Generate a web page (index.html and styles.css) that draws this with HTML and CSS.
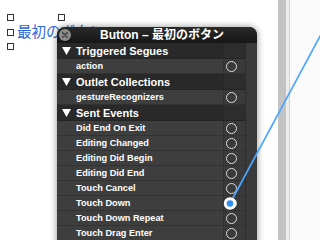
FILE: index.html
```html
<!DOCTYPE html>
<html>
<head>
<meta charset="utf-8">
<link rel="stylesheet" href="styles.css">
</head>
<body>
<div class="screen">
  <div class="canvas">
    <div class="btn">
      <span class="h h-tl"></span>
      <span class="h h-tr"></span>
      <span class="h h-ml"></span>
      <span class="h h-bl"></span>
      <span class="btn-label">最初のボタン</span>
    </div>
    <div class="panel">
      <div class="titlebar">
        <span class="close"><svg width="12" height="12" viewBox="0 0 12 12"><circle cx="6" cy="6" r="6" fill="#8c8c8c"/><path d="M3.8 3.8 L8.2 8.2 M8.2 3.8 L3.8 8.2" stroke="#4a4a4a" stroke-width="1.8" stroke-linecap="round"/></svg></span>
        <span class="title">Button – 最初のボタン</span>
      </div>
      <div class="body">
        <div class="list">
          <div class="row head"><span class="tri"><svg width="9" height="8" viewBox="0 0 9 8"><polygon points="0,0 9,0 4.5,8" fill="#fff"/></svg></span><span class="htext">Triggered Segues</span><span class="col"></span></div>
          <div class="row item"><span class="itext">action</span><span class="col"><i class="ring"></i></span></div>
          <div class="row head"><span class="tri"><svg width="9" height="8" viewBox="0 0 9 8"><polygon points="0,0 9,0 4.5,8" fill="#fff"/></svg></span><span class="htext">Outlet Collections</span><span class="col"></span></div>
          <div class="row item"><span class="itext">gestureRecognizers</span><span class="col"><i class="ring"></i></span></div>
          <div class="row head"><span class="tri"><svg width="9" height="8" viewBox="0 0 9 8"><polygon points="0,0 9,0 4.5,8" fill="#fff"/></svg></span><span class="htext">Sent Events</span><span class="col"></span></div>
          <div class="row item"><span class="itext">Did End On Exit</span><span class="col"><i class="ring"></i></span></div>
          <div class="row item"><span class="itext">Editing Changed</span><span class="col"><i class="ring"></i></span></div>
          <div class="row item"><span class="itext">Editing Did Begin</span><span class="col"><i class="ring"></i></span></div>
          <div class="row item"><span class="itext">Editing Did End</span><span class="col"><i class="ring"></i></span></div>
          <div class="row item"><span class="itext">Touch Cancel</span><span class="col"><i class="ring"></i></span></div>
          <div class="row item"><span class="itext">Touch Down</span><span class="col"><i class="ring"></i></span></div>
          <div class="row item"><span class="itext">Touch Down Repeat</span><span class="col"><i class="ring"></i></span></div>
          <div class="row item"><span class="itext">Touch Drag Enter</span><span class="col"><i class="ring"></i></span></div>
        </div>
        <div class="scroll"></div>
      </div>
    </div>
  </div>
  <div class="strip-gray"></div>
  <div class="strip-light"></div>
  <div class="pane"></div>
  <svg class="wire" width="320" height="240" viewBox="0 0 320 240">
    <line x1="230" y1="203.5" x2="332" y2="14" stroke="#4aa6ff" stroke-width="1.7"/>
    <circle cx="230" cy="203.5" r="6.2" fill="#ffffff"/>
    <circle cx="230" cy="203.5" r="3.3" fill="#2f8ff0"/>
  </svg>
</div>
</body>
</html>
```
FILE: styles.css
```css
* { box-sizing: border-box; }
html, body { margin: 0; padding: 0; }
body { width: 320px; height: 240px; overflow: hidden; background: #fff; font-family: "Liberation Sans", Arial, sans-serif; }
.screen { position: relative; display: flex; width: 320px; height: 240px; overflow: hidden; }
.canvas { position: relative; width: 278px; height: 240px; background: #fff; }
.strip-gray { width: 8px; background: #c3c3c3; }
.strip-light { width: 4px; background: #ececec; border-right: 1px solid #d2d2d2; }
.pane { flex: 1; background: #fafafa; }

.btn { position: absolute; left: 10px; top: 17px; width: 51px; height: 29px; }
.h { position: absolute; width: 7px; height: 7px; background: #fff; border: 1px solid #333; }
.h-tl { left: -3px; top: -3px; }
.h-tr { left: 48px; top: -3px; }
.h-ml { left: -3px; top: 12px; }
.h-bl { left: -3px; top: 26px; }
.btn-label { position: absolute; left: 7px; top: 4px; font-family: "Noto Sans CJK JP", sans-serif; font-size: 14.5px; line-height: 19px; color: #2c68d6; white-space: nowrap; }

.panel { position: absolute; left: 57px; top: 27px; width: 200px; height: 230px; background: #3e3e3e; border-radius: 8px 8px 0 0; box-shadow: 0 0 7px rgba(0,0,0,0.45); overflow: hidden; }
.titlebar { display: flex; align-items: center; height: 16px; background: linear-gradient(#2a2a2a, #161616); }
.close { display: flex; width: 12px; height: 12px; margin-left: 2px; }
.title { flex: 1; text-align: center; color: #fff; font-weight: bold; font-size: 12px; line-height: 16px; font-family: "Liberation Sans", "Noto Sans CJK JP", sans-serif; padding-right: 4px; white-space: nowrap; }
.body { display: flex; }
.list { width: 188px; }
.scroll { width: 12px; background: #3a3a3a; border-left: 1px solid #2c2c2c; }
.row { display: flex; align-items: center; color: #fff; font-weight: bold; }
.head { height: 16px; background: #292929; border-bottom: 1px solid #242424; }
.item { height: 15px; background: #3e3e3e; border-bottom: 1px solid #323232; }
.tri { display: flex; width: 19px; padding-left: 5px; }
.htext { flex: 1; font-size: 11px; }
.itext { flex: 1; font-size: 9.2px; padding-left: 19px; }
.col { display: flex; align-items: center; justify-content: flex-start; width: 22px; align-self: stretch; background: rgba(0,0,0,0.06); border-left: 1px solid rgba(0,0,0,0.12); }
.head .col { background: rgba(255,255,255,0.02); }
.ring { display: block; width: 11px; height: 11px; border-radius: 50%; border: 1.4px solid #dcdcdc; margin-left: 1.5px; }
.wire { position: absolute; left: 0; top: 0; pointer-events: none; }
```
